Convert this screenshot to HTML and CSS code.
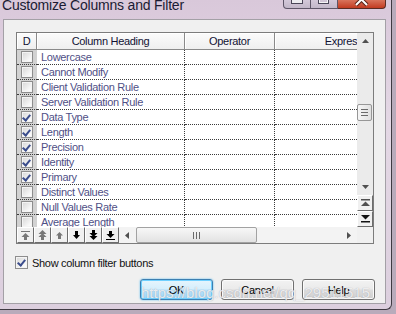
FILE: index.html
```html
<!DOCTYPE html>
<html lang="en">
<head>
  <meta charset="UTF-8">
  <title>Customize Columns and Filter</title>
  <link rel="stylesheet" href="styles.css">
</head>
<body>
  <div class="window">
    <div class="titlebar">
      <span class="title">Customize Columns and Filter</span>
      <div class="caption-buttons">
        <span class="cap cap-min">
          <svg width="14" height="8" viewBox="0 0 14 8"><rect x="1.5" y="-1.5" width="11" height="5" fill="#ececf0" stroke="#4a4658"/></svg>
        </span>
        <span class="cap cap-max">
          <svg width="14" height="8" viewBox="0 0 14 8"><rect x="1.5" y="-6.5" width="10" height="10" fill="none" stroke="#4a4658" stroke-width="1"/><rect x="2.5" y="-5.5" width="8" height="8" fill="none" stroke="#f4f4f6" stroke-width="1"/></svg>
        </span>
        <span class="cap cap-close">
          <svg width="16" height="8" viewBox="0 0 16 8"><path d="M2 -6 L13 5 M13 -6 L2 5" stroke="#5a2418" stroke-width="4"/><path d="M2 -6 L13 5 M13 -6 L2 5" stroke="#fff" stroke-width="2"/></svg>
        </span>
      </div>
    </div>

    <div class="client">
      <div class="grid-box">
        <div class="view">
          <div class="row head">
            <span class="hcell">D</span>
            <span class="hcell">Column Heading</span>
            <span class="hcell">Operator</span>
            <span class="hcell">Expression</span>
          </div>
          <div class="row"><span class="dcell"><i class="check"></i></span><span class="cell sep">Lowercase</span><span class="cell sep"></span><span class="cell"></span></div>
          <div class="row"><span class="dcell"><i class="check"></i></span><span class="cell sep">Cannot Modify</span><span class="cell sep"></span><span class="cell"></span></div>
          <div class="row"><span class="dcell"><i class="check"></i></span><span class="cell sep">Client Validation Rule</span><span class="cell sep"></span><span class="cell"></span></div>
          <div class="row"><span class="dcell"><i class="check"></i></span><span class="cell sep">Server Validation Rule</span><span class="cell sep"></span><span class="cell"></span></div>
          <div class="row"><span class="dcell"><i class="check on"></i></span><span class="cell sep">Data Type</span><span class="cell sep"></span><span class="cell"></span></div>
          <div class="row"><span class="dcell"><i class="check on"></i></span><span class="cell sep">Length</span><span class="cell sep"></span><span class="cell"></span></div>
          <div class="row"><span class="dcell"><i class="check on"></i></span><span class="cell sep">Precision</span><span class="cell sep"></span><span class="cell"></span></div>
          <div class="row"><span class="dcell"><i class="check on"></i></span><span class="cell sep">Identity</span><span class="cell sep"></span><span class="cell"></span></div>
          <div class="row"><span class="dcell"><i class="check on"></i></span><span class="cell sep">Primary</span><span class="cell sep"></span><span class="cell"></span></div>
          <div class="row"><span class="dcell"><i class="check"></i></span><span class="cell sep">Distinct Values</span><span class="cell sep"></span><span class="cell"></span></div>
          <div class="row"><span class="dcell"><i class="check"></i></span><span class="cell sep">Null Values Rate</span><span class="cell sep"></span><span class="cell"></span></div>
          <div class="row"><span class="dcell"><i class="check"></i></span><span class="cell sep">Average Length</span><span class="cell sep"></span><span class="cell"></span></div>
        </div>

        <div class="vscroll">
          <span class="sb-arrow">
            <svg width="7" height="4" viewBox="0 0 7 4"><path d="M3.5 0 L7 4 L0 4 Z" fill="#505050"/></svg>
          </span>
          <div class="vtrack">
            <span class="vthumb"><i></i><i></i><i></i></span>
          </div>
          <span class="sb-arrow">
            <svg width="7" height="4" viewBox="0 0 7 4"><path d="M0 0 L7 0 L3.5 4 Z" fill="#505050"/></svg>
          </span>
          <span class="sb-btn">
            <svg width="9" height="8" viewBox="0 0 9 8"><rect x="0" y="0" width="9" height="1.5" fill="#505050"/><path d="M4.5 2.5 L9 7 L0 7 Z" fill="#505050"/></svg>
          </span>
          <span class="sb-btn">
            <svg width="9" height="8" viewBox="0 0 9 8"><path d="M0 0 L9 0 L4.5 4.5 Z" fill="#111"/><rect x="0" y="6" width="9" height="1.5" fill="#111"/></svg>
          </span>
        </div>

        <div class="bottombar">
          <div class="move-tools">
            <span class="tool off">
              <svg width="9" height="9" viewBox="0 0 9 9"><rect x="0" y="0" width="9" height="1" fill="#777"/><path d="M4.5 2 L8.5 6 L6 6 L6 9 L3 9 L3 6 L0.5 6 Z" fill="#777"/></svg>
            </span>
            <span class="tool off">
              <svg width="9" height="10" viewBox="0 0 9 10"><path d="M4.5 0 L8.5 4 L0.5 4 Z M4.5 3 L8.5 7 L0.5 7 Z" fill="#777"/><rect x="3" y="6" width="3" height="4" fill="#777"/></svg>
            </span>
            <span class="tool off">
              <svg width="7" height="7" viewBox="0 0 7 7"><path d="M3.5 0 L7 3.5 L5 3.5 L5 7 L2 7 L2 3.5 L0 3.5 Z" fill="#777"/></svg>
            </span>
            <span class="tool">
              <svg width="7" height="8" viewBox="0 0 7 8"><path d="M2 0 L5 0 L5 4 L7 4 L3.5 8 L0 4 L2 4 Z" fill="#000"/></svg>
            </span>
            <span class="tool">
              <svg width="9" height="10" viewBox="0 0 9 10"><rect x="3" y="0" width="3" height="4" fill="#000"/><path d="M0.5 3 L8.5 3 L4.5 7 Z M0.5 6 L8.5 6 L4.5 10 Z" fill="#000"/></svg>
            </span>
            <span class="tool">
              <svg width="9" height="9" viewBox="0 0 9 9"><path d="M3 0 L6 0 L6 3 L8.5 3 L4.5 7 L0.5 3 L3 3 Z" fill="#000"/><rect x="0" y="8" width="9" height="1" fill="#000"/></svg>
            </span>
          </div>
          <div class="hscroll">
            <span class="sb-harrow">
              <svg width="4" height="7" viewBox="0 0 4 7"><path d="M4 0 L4 7 L0 3.5 Z" fill="#505050"/></svg>
            </span>
            <div class="htrack">
              <span class="hthumb"><i></i><i></i><i></i></span>
            </div>
            <span class="sb-harrow">
              <svg width="4" height="7" viewBox="0 0 4 7"><path d="M0 0 L4 3.5 L0 7 Z" fill="#505050"/></svg>
            </span>
          </div>
        </div>

        <div class="corner"></div>
      </div>

      <label class="option"><i class="check on big"></i>Show column filter buttons</label>

      <div class="actions">
        <button class="btn default">OK</button>
        <button class="btn">Cancel</button>
        <button class="btn">Help</button>
      </div>
    </div>

    <span class="watermark">https://blog.csdn.net/qq_29511515</span>
  </div>
</body>
</html>
```

FILE: styles.css
```css
* { box-sizing: border-box; }

body {
  margin: 0;
  width: 396px;
  height: 314px;
  overflow: hidden;
  background: #b9abbb;
  font-family: "Liberation Sans", Arial, sans-serif;
  font-size: 11px;
  letter-spacing: -0.3px;
}

.window {
  position: relative;
  width: 392px;
  height: 310px;
  padding: 0 5px 5px 3px;
  display: flex;
  flex-direction: column;
  background: linear-gradient(#d9c8da, #e4d8e5 40%, #dccfde);
  border-right: 1px solid #3f3a42;
  border-bottom: 1px solid #3f3a42;
  border-bottom-right-radius: 6px;
}

/* title bar */
.titlebar {
  height: 19px;
  display: flex;
  justify-content: space-between;
  align-items: flex-start;
}
.title {
  margin: -3px 0 0 -1px;
  font-size: 14px;
  line-height: 16px;
  letter-spacing: -0.2px;
  color: #1b1b33;
}
.caption-buttons { display: flex; }
.cap {
  height: 9px;
  display: flex;
  justify-content: center;
  align-items: flex-start;
  overflow: hidden;
  border: 1px solid #5e5668;
  border-top: none;
  background: linear-gradient(#d3c8d9, #c2b7c9);
}
.cap-min { width: 28px; border-bottom-left-radius: 4px; }
.cap-max { width: 27px; border-left: none; }
.cap-close {
  width: 48px;
  border-left: none;
  border-color: #5b2c24;
  border-bottom-right-radius: 4px;
  background: linear-gradient(#d9735b, #c23b21);
}

/* dialog body */
.client {
  width: 383px;
  height: 285px;
  padding: 12px 10px 0 12px;
  background: #f0f0f0;
  border: 1px solid #a3a0a6;
}

.grid-box {
  width: 358px;
  height: 212px;
  display: grid;
  grid-template-columns: 340px 16px;
  grid-template-rows: 194px 16px;
  border: 1px solid #7c7c7c;
  background: #fff;
}

.view { overflow: hidden; }
.row {
  display: grid;
  grid-template-columns: 20px 148px 90px 152px;
  height: 15px;
}
.row.head { height: 17px; }

.hcell {
  border-right: 1px solid #8a8a8a;
  border-bottom: 1px solid #8a8a8a;
  background: linear-gradient(#fbfbfb, #efefef);
  box-shadow: inset 1px 1px 0 #fff;
  text-align: center;
  line-height: 16px;
  color: #111133;
  white-space: nowrap;
}

.cell {
  padding-left: 4px;
  line-height: 14px;
  color: #4f4f86;
  white-space: nowrap;
  overflow: hidden;
  border-bottom: 1px dotted #3a3a3a;
}
.cell.sep { border-right: 1px dotted #3a3a3a; }

.dcell {
  display: flex;
  justify-content: center;
  align-items: center;
  background: #d2d2d2;
  border-bottom: 1px dotted #3a3a3a;
}

.check {
  position: relative;
  width: 12px;
  height: 12px;
  border: 1px solid #8d8d8d;
  background: linear-gradient(135deg, #d6d6d6, #f6f6f6 70%, #fff);
  box-shadow: inset 0 0 0 1px #f4f4f4;
}
.check.on::after {
  content: "";
  position: absolute;
  left: 2px;
  top: 1px;
  width: 3px;
  height: 6px;
  border: solid #3b4d8c;
  border-width: 0 2px 2px 0;
  transform: rotate(40deg);
}
.check.big { width: 13px; height: 13px; }
.check.big::after { left: 3px; }

/* vertical scrollbar */
.vscroll {
  display: flex;
  flex-direction: column;
  background: #ebebeb;
}
.sb-arrow {
  height: 16px;
  display: flex;
  justify-content: center;
  align-items: center;
}
.vtrack { flex: 1; }
.vthumb {
  margin: 55px 0 0 0;
  width: 15px;
  height: 17px;
  display: flex;
  flex-direction: column;
  justify-content: center;
  align-items: center;
  gap: 2px;
  border: 1px solid #979797;
  border-radius: 2px;
  background: linear-gradient(90deg, #f6f6f6, #e0e0e0);
}
.vthumb i { width: 7px; height: 1px; background: #6a6a6a; }
.sb-btn {
  height: 16px;
  display: flex;
  justify-content: center;
  align-items: center;
  background: #f0f0f0;
  border: 1px solid;
  border-color: #fff #6d6d6d #6d6d6d #fff;
}

/* bottom strip: move buttons + horizontal scrollbar */
.bottombar {
  display: flex;
  background: #f0f0f0;
}
.move-tools { display: flex; }
.tool {
  width: 17px;
  height: 16px;
  display: flex;
  justify-content: center;
  align-items: center;
  background: #f0f0f0;
  border: 1px solid;
  border-color: #fff #6d6d6d #6d6d6d #fff;
}
.hscroll {
  flex: 1;
  display: flex;
  background: #f3f3f3;
}
.sb-harrow {
  width: 16px;
  display: flex;
  justify-content: center;
  align-items: center;
}
.htrack { flex: 1; }
.hthumb {
  margin-left: 1px;
  width: 121px;
  height: 16px;
  display: flex;
  justify-content: center;
  align-items: center;
  gap: 2px;
  border: 1px solid #a2a2a2;
  border-radius: 2px;
  background: linear-gradient(#f7f7f7, #e2e2e2);
}
.hthumb i { width: 1px; height: 7px; background: #6a6a6a; }
.corner { background: #f0f0f0; }

/* options and buttons */
.option {
  display: flex;
  align-items: center;
  gap: 4px;
  margin: 12px 0 0 -1px;
  height: 13px;
  color: #111;
}

.actions {
  display: flex;
  justify-content: flex-end;
  gap: 8px;
  margin-top: 10px;
}
.btn {
  width: 73px;
  height: 21px;
  padding: 0;
  font-family: inherit;
  font-size: 11px;
  letter-spacing: -0.3px;
  color: #000;
  border: 1px solid #707070;
  border-radius: 3px;
  background: linear-gradient(#f2f2f2, #ebebeb 45%, #dddddd 55%, #cfcfcf);
  box-shadow: inset 0 0 0 1px #fbfbfb;
}
.btn.default {
  border-color: #3c7fb1;
  background: linear-gradient(#e6f5fd, #d6effc 45%, #b8e3fb 55%, #9dd5f4);
  box-shadow: inset 0 0 0 1px #6fd0ff, 0 0 2px #4cb7f0;
}

.watermark {
  position: absolute;
  left: 141px;
  top: 284px;
  font-size: 15px;
  letter-spacing: 0;
  color: rgba(255, 255, 255, 0.8);
  text-shadow: 0 0 1px rgba(110, 110, 130, 0.6);
  pointer-events: none;
}
```
